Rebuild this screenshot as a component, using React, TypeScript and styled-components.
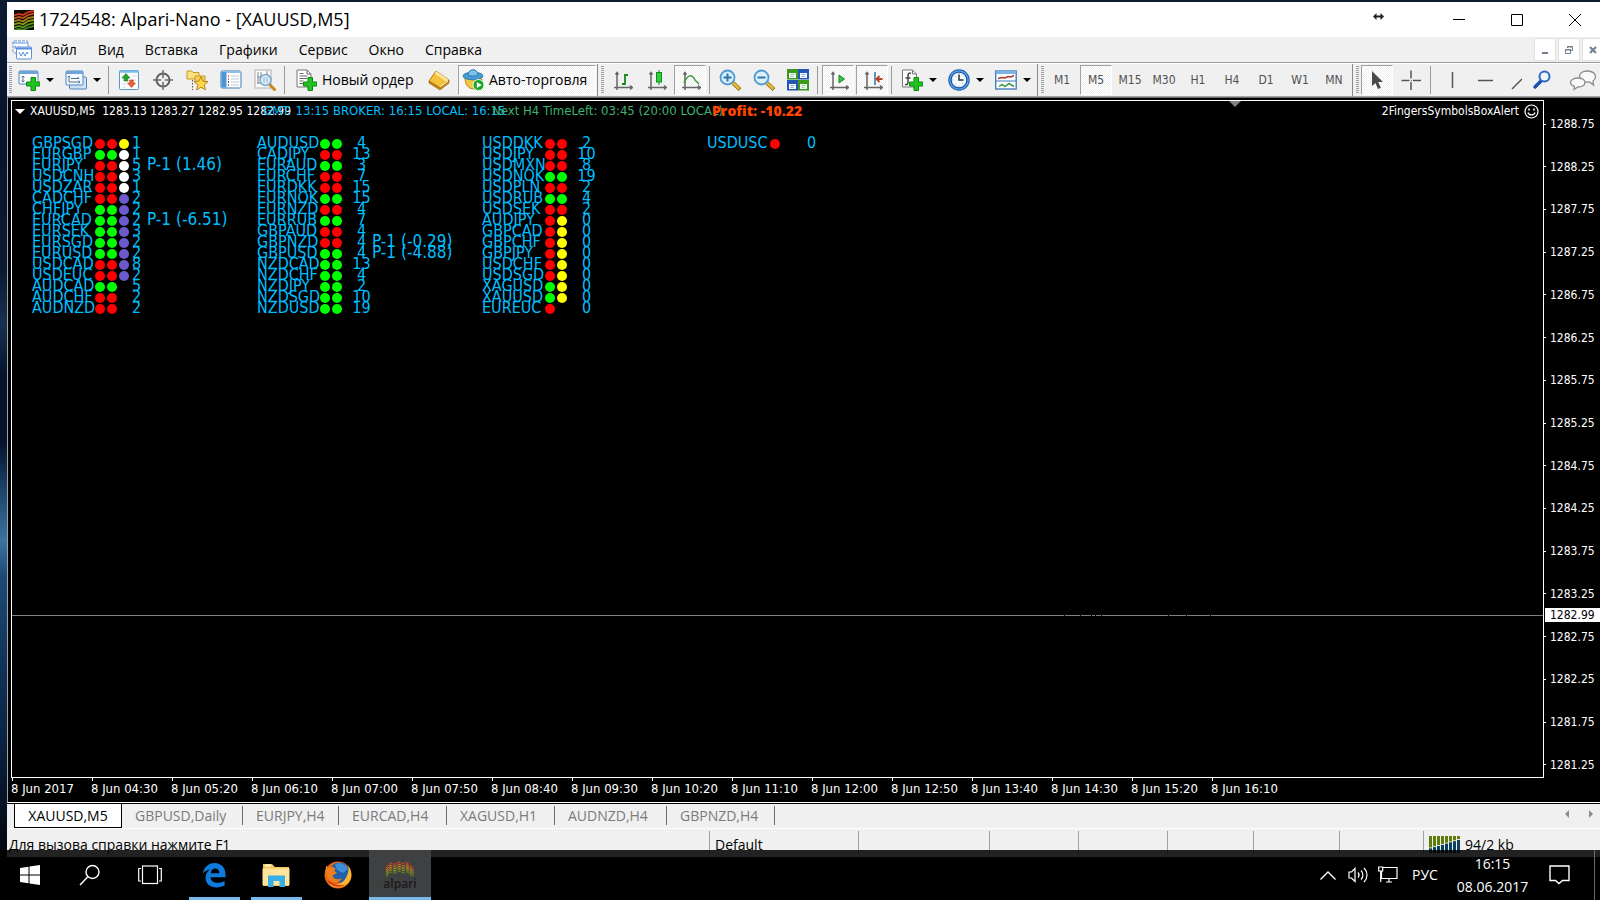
import React from 'react';
import styled, { createGlobalStyle, css } from 'styled-components';

const uiFont = '"Open Sans", "Noto Sans", sans-serif';
const chartFont = '"DejaVu Sans Condensed", "DejaVu Sans", sans-serif';

const GlobalStyle = createGlobalStyle`
  * { box-sizing: border-box; }
  body { margin: 0; font-family: ${uiFont}; font-size: 14px; line-height: 20px; color: #000; }
  button { border: 0; padding: 0; margin: 0; background: none; font: inherit; color: inherit; }
  svg { display: block; flex: none; }
`;

/* ---------- desktop and window ---------- */

const Desktop = styled.div`
  height: 100vh;
  min-height: 480px;
  display: flex;
  flex-direction: column;
  overflow: hidden;
  background: linear-gradient(
    180deg, #0b1c33 0, #06152b 14%, #0a1a31 30%, #17304f 36%, #04122a 42%, #04122a 49%,
    #1a3f63 54%, #3a74a0 60%, #1d4a75 64%, #12365c 72%, #0a2342 82%, #030a16 93%, #020509 95%, #000204 100%
  );
`;

const Window = styled.main`
  flex: 1;
  min-height: 0;
  margin: 2px 0 0 7px;
  display: flex;
  flex-direction: column;
  background: #f0f0f0;
  overflow: hidden;
`;

const TitleBar = styled.header`
  height: 35px;
  flex: none;
  display: flex;
  align-items: center;
  padding-left: 7px;
  background: #fff;
`;

const Title = styled.h1`
  flex: 1;
  margin: 0 0 0 5px;
  padding-bottom: 2px;
  font-size: 18px;
  line-height: 24px;
  font-weight: 400;
`;

const WindowButton = styled.button`
  width: 58px;
  height: 34px;
  display: grid;
  place-items: center;
  &:last-child { margin-right: -4px; }
`;

const MoveHandle = styled.button`
  width: 48px;
  height: 34px;
  margin-right: 28px;
  padding-bottom: 7px;
  display: grid;
  place-items: center;
`;

const MenuBar = styled.nav`
  height: 26px;
  flex: none;
  display: flex;
  align-items: center;
  padding-left: 5px;
  border-bottom: 1px solid #9c9c9c;
`;

const MenuList = styled.div`
  flex: 1;
  display: flex;
  gap: 21px;
  margin-left: 9px;
`;

const MdiButton = styled.button`
  width: 22px;
  height: 23px;
  margin-left: 2px;
  display: grid;
  place-items: center;
  background: #fff;
  border: 1px solid #e2e2e2;
  &:last-child { margin-right: -4px; }
`;

/* ---------- toolbar ---------- */

const ToolBar = styled.div`
  height: 34px;
  flex: none;
  display: flex;
  align-items: center;
  padding-left: 2px;
  border-top: 1px solid #fff;
  border-bottom: 1px solid #a5a5a5;
  overflow: hidden;
`;

const Grip = styled.span`
  width: 3px;
  height: 28px;
  flex: none;
  background: repeating-linear-gradient(180deg, #a0a0a0 0 1px, #f0f0f0 1px 2px);
`;

const GroupGap = styled.span`
  height: 32px;
  flex: none;
  display: flex;
  align-items: center;
  width: 8px;
  margin-left: 1px;
  padding-left: 3px;
  border-left: 1px solid #8a8a8a;
`;

const Separator = styled.span`
  width: 1px;
  height: 28px;
  flex: none;
  margin: 0 3px 0 2px;
  background: #9a9a9a;
`;

const pressedLook = css`
  background: repeating-conic-gradient(#fff 0 25%, #f0f0f0 0 50%) 0 0 / 2px 2px;
  border: 1px solid #a0a0a0;
  border-right-color: #fff;
  border-bottom-color: #fff;
`;

const Tool = styled.button<{ $pressed?: boolean }>`
  width: 32px;
  height: 30px;
  flex: none;
  margin: 0 1px;
  display: grid;
  place-items: center;
  color: #505050;
  font-family: ${chartFont};
  font-size: 12px;
  ${p => p.$pressed && pressedLook}
`;

const ClippedTool = styled(Tool)`
  flex: 0 1 32px;
  min-width: 0;
  margin-right: 0;
  overflow: hidden;
  justify-items: start;
`;

const DropTool = styled.button`
  width: 47px;
  height: 30px;
  flex: none;
  display: flex;
  align-items: center;
  padding-left: 6px;
  gap: 6px;
`;

const Caret = styled.span`
  border: 4px solid transparent;
  border-top-color: #000;
  border-bottom: 0;
`;

const WideTool = styled.button<{ $pressed?: boolean }>`
  height: 30px;
  flex: none;
  display: flex;
  align-items: center;
  gap: 5px;
  width: ${p => (p.$pressed ? 138 : 134)}px;
  margin-left: ${p => (p.$pressed ? 2 : 0)}px;
  padding-left: ${p => (p.$pressed ? 3 : 7)}px;
  white-space: nowrap;
  ${p => p.$pressed && pressedLook}
`;

const ToolEnd = styled.div`
  margin-left: auto;
  display: flex;
  flex: none;
  gap: 6px;
  padding-left: 4px;
`;

/* ---------- chart ---------- */

const ChartPane = styled.section`
  flex: 1;
  min-height: 0;
  display: grid;
  grid-template: minmax(0, 1fr) 24px / minmax(0, 1fr) 56px;
  padding: 2px 0 0 3px;
  background: #000;
  border-top: 1px solid #696969;
  border-left: 1px solid #a0a0a0;
  border-bottom: 1px solid #fff;
  color: #fff;
  font-family: ${chartFont};
  font-size: 12px;
`;

const Plot = styled.div`
  position: relative;
  border: 1px solid #fff;
  padding: 0 4px 0 3px;
  overflow: hidden;
`;

const PlotHeader = styled.div`
  display: flex;
  align-items: center;
  height: 20px;
  gap: 5px;
`;

const Quote = styled.span`
  flex: 1;
  white-space: pre;
`;

const HeaderCaret = styled.span`
  border: 5px solid transparent;
  border-top-color: #fff;
  border-bottom: 0;
`;

const ShiftMark = styled.span`
  position: absolute;
  top: 0;
  right: 302px;
  border: 6px solid transparent;
  border-top-color: #808080;
  border-bottom: 0;
`;

const ChartLabel = styled.span<{ $left: number; $color: string; $heavy?: boolean }>`
  position: absolute;
  top: 0;
  left: ${p => p.$left}px;
  color: ${p => p.$color};
  white-space: nowrap;
  font-size: 13px;
  ${p => p.$heavy && css`font: 800 14px/20px "Open Sans", sans-serif;`}
`;

const PriceLine = styled.svg`
  position: absolute;
  left: 0;
  top: 76%;
  width: 100%;
  height: 1px;
`;

const SymbolBoard = styled.div`
  display: grid;
  grid-template-columns: repeat(4, 225px);
  padding: 16px 0 0 17px;
`;

const SymbolRow = styled.div`
  display: grid;
  grid-template-columns: 63px 36px 11px max-content;
  height: 11px;
  line-height: 11px;
  font-size: 16px;
  color: #00bfff;
  white-space: nowrap;
`;

const Dots = styled.span`
  display: flex;
  gap: 2px;
  padding-top: 2px;
  z-index: 1;
`;

const dotColors: Record<string, string> = { r: '#f00', g: '#0f0', y: '#ff0', w: '#fff', p: '#6a5acd' };

const Dot = styled.i<{ $c: string }>`
  width: 10px;
  height: 10px;
  border-radius: 50%;
  background: ${p => dotColors[p.$c]};
`;

const Count = styled.span`
  display: flex;
  justify-content: center;
`;

const Position = styled.span`
  padding-left: 5px;
  font-size: 17px;
`;

const PriceAxis = styled.div`
  position: relative;
  display: flex;
  flex-direction: column;
  justify-content: space-between;
  padding: 15px 0 4px;
`;

const Price = styled.span`
  display: flex;
  align-items: center;
  gap: 4px;
  line-height: 18px;
  &::before { content: ''; width: 2px; height: 1px; background: #fff; }
`;

const CurrentPrice = styled.span`
  position: absolute;
  top: 76%;
  left: 1px;
  right: 0;
  transform: translateY(-50%);
  padding-left: 5px;
  line-height: 14px;
  background: #fff;
  color: #000;
`;

const TimeAxis = styled.div`
  grid-column: 1 / -1;
  display: grid;
  grid-template-columns: repeat(16, 80px);
  overflow: hidden;
`;

const Time = styled.span`
  position: relative;
  white-space: nowrap;
  font-size: 13px;
  line-height: 22px;
  &::before {
    content: '';
    position: absolute;
    top: 0;
    left: 1px;
    width: 1px;
    height: 3px;
    background: #fff;
  }
`;

/* ---------- tabs and status bar ---------- */

const TabStrip = styled.nav`
  height: 26px;
  flex: none;
  display: flex;
  padding-left: 7px;
  border-top: 1px solid #000;
  border-bottom: 1px solid #fff;
`;

const Tab = styled.button<{ $width: number; $active?: boolean }>`
  width: ${p => p.$width}px;
  flex: none;
  padding-left: ${p => (p.$active ? 0 : 13)}px;
  text-align: ${p => (p.$active ? 'center' : 'left')};
  white-space: nowrap;
  color: ${p => (p.$active ? '#000' : '#7b7b7b')};
  ${p => p.$active
    ? css`
        background: #fff;
        border: 1px solid #000;
        border-top: 0;
      `
    : css`
        position: relative;
        &::after {
          content: '';
          position: absolute;
          right: 0;
          top: 2px;
          width: 1px;
          height: 19px;
          background: #6d6d6d;
        }
      `}
`;

const TabScroll = styled.div`
  margin-left: auto;
  display: flex;
  gap: 20px;
  align-items: center;
  padding: 0 7px 4px 0;
`;

const ScrollButton = styled.button`
  width: 4px;
  height: 8px;
`;

const StatusBar = styled.footer`
  height: 28px;
  flex: none;
  display: flex;
  align-items: center;
  padding-left: 2px;
`;

const StatusCell = styled.span<{ $width?: number }>`
  ${p => (p.$width ? `width: ${p.$width}px; flex: none; padding-left: 5px; border-left: 1px solid #a0a0a0;` : 'flex: 1;')}
  height: 24px;
  display: flex;
  align-items: center;
  gap: 5px;
  line-height: 24px;
  padding-top: 3px;
  white-space: nowrap;
`;

/* ---------- taskbar ---------- */

const TaskBar = styled.nav`
  position: relative;
  height: 50px;
  margin-top: -7px;
  flex: none;
  display: flex;
  background: rgba(0, 0, 0, 0.86);
  color: #fff;
`;

const TaskButton = styled.button<{ $app?: boolean; $open?: boolean; $active?: boolean }>`
  width: ${p => (p.$app ? 62 : 60)}px;
  display: grid;
  place-items: center;
  background: linear-gradient(#76b9ed, #76b9ed) center bottom / ${p => (p.$active ? '100%' : p.$open ? '51px' : '0')} 3px no-repeat
    ${p => (p.$active ? '#3f4042' : 'transparent')};
`;

const Gap = styled.span<{ $width: number }>`
  width: ${p => p.$width}px;
`;

const Tray = styled.div`
  margin-left: auto;
  display: flex;
  align-items: center;
`;

const TrayButton = styled.button<{ $width: number }>`
  width: ${p => p.$width}px;
  height: 50px;
  display: grid;
  place-items: center;
  line-height: 22px;
`;

const Clock = styled.time`
  width: 91px;
  text-align: center;
  line-height: 23px;
  padding-bottom: 1px;
`;

const ShowDesktop = styled.button`
  width: 6px;
  height: 50px;
  border-left: 1px solid #6a6a6a;
`;

/* ---------- icons ---------- */

const Svg = ({ s = 22, children }: { s?: number; children: React.ReactNode }) => (
  <svg width={s} height={s} viewBox="0 0 22 22" fill="none" aria-hidden="true">{children}</svg>
);

const Plus = () => (
  <path d="M13 8.500h4.500v4.500h4.500v4h-4.500v4.500h-4.500v-4.500h-4.500v-4h4.500z" fill="#1fc41f" stroke="#0a8a0f" />
);

const LogoIcon = () => (
  <svg width="20" height="20" viewBox="0 0 20 20" fill="none" strokeWidth="1.800" aria-hidden="true">
    <rect width="20" height="20" fill="#120c04" />
    <path d="M0 5.500l5-1.500 4 1 5-3 6-1" stroke="#d8351c" />
    <path d="M0 8.500l5-1.500 4 1 5-3 6-1.500" stroke="#c8551c" />
    <path d="M0 11.500l5-1.500 4 1.500 5-3.500 6-1" stroke="#a8801c" />
    <path d="M0 14.500l5-1.500 4 1.500 5-3.500 6-1" stroke="#8a9a1a" />
    <path d="M0 17.500l5-1.500 4 1.500 5-3 6-1.500" stroke="#5c9c1c" />
    <path d="M0 20l5-1 4 1 5-2.500 6-1.500" stroke="#3c8c20" />
  </svg>
);

const MdiIcon = () => (
  <svg width="20" height="20" viewBox="0 0 20 20" fill="none" stroke="#5b8fdc" aria-hidden="true">
    <rect x="1" y="1" width="15" height="12" rx="1" fill="#fff" strokeDasharray="3 1" />
    <path d="M1 3h15M3 9V6l2 3 2-3" />
    <rect x="4.500" y="7" width="15" height="12" rx="1" fill="#fff" />
    <path d="M4.500 8.500h15" strokeWidth="2" />
    <path d="M7 12l2 4 2-4 2 4 2-4 1 2" />
  </svg>
);

const NewChartIcon = () => (
  <Svg>
    <rect x="1" y="2" width="19" height="13" rx="1" fill="#fff" stroke="#4f86bd" />
    <path d="M1 3.500h19" stroke="#6ea4d8" strokeWidth="3" />
    <path d="M5 7v6M3.500 8.500L5 7l1.500 1.500M3.500 11.500L5 13l1.500-1.500" stroke="#5a7085" />
    <Plus />
  </Svg>
);

const ProfilesIcon = () => (
  <Svg>
    <rect x="4.500" y="8" width="17" height="12" rx="1" fill="#cfe2f5" stroke="#4f86bd" />
    <rect x="1" y="2" width="17" height="14" rx="1" fill="#f4faff" stroke="#4f86bd" />
    <path d="M1 3.500h17" stroke="#6ea4d8" strokeWidth="3" />
    <path d="M4 7v6h11M2.800 8.200L4 7l1.200 1.200M13.500 11.500L15 13l-1.500 1.500M6 9.500h8l-1.500-1.500" stroke="#5a7085" />
  </Svg>
);

const MarketIcon = () => (
  <Svg>
    <rect x="1.500" y="1.500" width="19" height="19" rx="1" fill="#fdfdfd" stroke="#4f9bd0" />
    <path d="M1.500 2.500h19" stroke="#77bce8" strokeWidth="2.500" />
    <path d="M4 7h5M4 11h4M14 7h5M14 11h4M4 15h4M4 18h4" stroke="#dcdcdc" />
    <path d="M8 4.500l4 4.500H9.800v3H6.200V9H4z" fill="#23a32b" stroke="#0d7a16" strokeWidth=".6" />
    <path d="M13.500 18.500l-4-4.500h2.200v-3h3.600v3h2.200z" fill="#e9603a" stroke="#c03c18" strokeWidth=".6" />
  </Svg>
);

const TargetIcon = () => (
  <Svg>
    <circle cx="11" cy="11" r="6.500" stroke="#5e5e5e" strokeWidth="2" />
    <path d="M11 1v20M1 11h20" stroke="#6a6a6a" strokeWidth="1.500" />
    <circle cx="11" cy="11" r="2" fill="#f0f0f0" />
  </Svg>
);

const NavigatorIcon = () => (
  <Svg>
    <path d="M1 2h5l1 1.500h6V10H1z" fill="#fbe182" stroke="#c99b22" />
    <path d="M6.500 11v10" stroke="#555" strokeDasharray="1.500 1.500" />
    <path d="M9 7h10v6H9z" fill="#f7d25c" stroke="#c99b22" />
    <path d="M15 7.500l2 4.700 5 .4-3.800 3.300 1.200 5-4.400-2.700-4.400 2.700 1.200-5L8 12.600l5-.4z" fill="#ffd84a" stroke="#b9861a" />
  </Svg>
);

const TerminalIcon = () => (
  <Svg>
    <rect x="1" y="2" width="20" height="17" rx="1.500" fill="#fff" stroke="#3b78b8" />
    <path d="M1.500 3h5v15.500h-5z" fill="#4c96d8" />
    <path d="M6 3h15" stroke="#8fc0ea" strokeWidth="2" />
    <path d="M8 7h1M8 10h1" stroke="#e03a2a" strokeWidth="1.500" />
    <path d="M8 13h1M8 16h1" stroke="#333" strokeWidth="1.500" />
    <path d="M11 7h8M11 10h8M11 13h8M11 16h8" stroke="#b8c8d8" />
  </Svg>
);

const TesterIcon = () => (
  <Svg>
    <rect x="1" y="1" width="16" height="18" fill="#fafafa" stroke="#b0b0b0" />
    <path d="M4 3v12M7 3v9M13 2v6M3 8h11M3 14h5" stroke="#8a8a8a" />
    <path d="M15.500 15.500l5 5" stroke="#c98a1c" strokeWidth="3" strokeLinecap="round" />
    <circle cx="11.500" cy="11" r="5.500" fill="#d6ebfa" fillOpacity=".9" stroke="#7da8cc" strokeWidth="1.500" />
    <path d="M10 8.500v5M13 8.500v5" stroke="#8eb0c8" />
  </Svg>
);

const OrderIcon = () => (
  <Svg>
    <path d="M2 1h10l4 4v13H2z" fill="#fff" stroke="#777" />
    <path d="M12 1v4h4M4.500 4.500h4M4.500 7h8M4.500 9.500h8M4.500 12h4M4.500 14.500h4" stroke="#666" />
    <Plus />
  </Svg>
);

const BookIcon = () => (
  <Svg>
    <path d="M8 2l13 9-9 8L1 12z" fill="#f5c23c" stroke="#b27b14" />
    <path d="M8 2l13 9-2 2L7 5z" fill="#ffe59a" />
    <path d="M1 12l11 7 9-8v3l-9 7-11-7z" fill="#c98b1e" stroke="#97640c" strokeWidth=".7" />
    <path d="M12 18l8-6" stroke="#fff4cf" />
  </Svg>
);

const AutoIcon = () => (
  <Svg>
    <path d="M3 9c0 6 3 11 9 11 5 0 8-5 8-10z" fill="#f2c83c" stroke="#b88c1c" />
    <ellipse cx="11" cy="7" rx="10" ry="3.800" fill="#4b9bd4" stroke="#2d78b2" />
    <path d="M6 6c0-7 10-7 10 0-2 1.500-8 1.500-10 0z" fill="#7cc0ec" stroke="#2d78b2" />
    <circle cx="16.500" cy="16" r="5.500" fill="#19a52a" stroke="#e8ffe8" />
    <path d="M14.800 13l5 3-5 3z" fill="#fff" />
  </Svg>
);

/* The axis icons sit low and to the right in their 22px box. */
const AxisSvg = ({ children }: { children: React.ReactNode }) => (
  <svg width="22" height="22" viewBox="-2 -1 22 22" fill="none" aria-hidden="true">
    <path d="M4 2.500V18M1 17.500h18M2.500 4.500L4 2.500l1.500 2M17 15.500l2.500 2-2.500 2M4 17v3" stroke="#666" strokeWidth="1.500" />
    {children}
  </svg>
);

const BarsIcon = () => (
  <AxisSvg><path d="M12 4v11M12 5h3M9 14h3" stroke="#158a22" strokeWidth="1.800" /></AxisSvg>
);

const CandlesIcon = () => (
  <AxisSvg>
    <path d="M12 0v15" stroke="#158a22" />
    <rect x="9.500" y="2.500" width="5" height="9.500" fill="#2bd13a" stroke="#158a22" />
  </AxisSvg>
);

const LineIcon = () => (
  <AxisSvg><path d="M3 13c4-9 8-9 11-3l4 4" stroke="#3a9a46" strokeWidth="1.500" /></AxisSvg>
);

const ZoomIcon = ({ plus }: { plus?: boolean }) => (
  <Svg>
    <path d="M14 14l7 6.500" stroke="#8a6a14" strokeWidth="4" />
    <path d="M14 14l6.500 6" stroke="#e8b838" strokeWidth="2.500" />
    <circle cx="8.500" cy="8.500" r="7" fill="#d9effb" stroke="#4f9bd0" strokeWidth="1.800" />
    <path d={plus ? 'M8.500 4.500v8M4.500 8.500h8' : 'M4.500 8.500h8'} stroke="#2f74ad" strokeWidth="2" />
  </Svg>
);

const TileIcon = () => (
  <Svg>
    {[['0', '0', '#3a9a1c'], ['11', '0', '#2456b8'], ['0', '11', '#2456b8'], ['11', '11', '#3a9a1c']].map(([x, y, c]) => (
      <g key={x + y} transform={`translate(${x} ${y})`}>
        <rect width="11" height="10.500" fill={c} />
        <rect x="2" y="4" width="7" height="5" fill="#f4f8ff" />
        <path d="M3.500 5.500h4M3.500 7.500h3" stroke={c} strokeOpacity=".5" />
      </g>
    ))}
  </Svg>
);

const AutoScrollIcon = () => (
  <AxisSvg><path d="M10 5l5.500 4-5.500 4z" fill="#36c244" stroke="#158a22" /></AxisSvg>
);

const ShiftIcon = () => (
  <AxisSvg>
    <path d="M12 2v13" stroke="#2f74ad" strokeWidth="1.500" />
    <path d="M19.500 9H14M16.500 6l-3 3 3 3" stroke="#b8401c" strokeWidth="1.800" />
  </AxisSvg>
);

const IndicatorIcon = () => (
  <Svg>
    <path d="M1.500 1h10l4 4v13h-14z" fill="#fff" stroke="#777" />
    <path d="M11.500 1v4h4" stroke="#777" />
    <path d="M10 4.500C7 3 7 6 7 8v5c0 2-1 3-3 2.500M4.500 9h5" stroke="#444" strokeWidth="1.500" />
    <Plus />
  </Svg>
);

const ClockIcon = () => (
  <Svg>
    <circle cx="11" cy="11" r="9" fill="#f4f8fc" stroke="#1c5aa8" strokeWidth="3.500" />
    <circle cx="11" cy="11" r="9.200" stroke="#5aa6ec" strokeWidth="1.200" />
    <path d="M11 5.500V11h4.500" stroke="#333" strokeWidth="1.500" />
    <path d="M11 4v1M11 17v1M4.500 11h1M7 7l.5.500M7 15l.5-.5M15 15l-.5-.5" stroke="#999" />
  </Svg>
);

const TemplateIcon = () => (
  <Svg>
    <rect x=".7" y="2" width="20.500" height="18" fill="#fff" stroke="#3b78b8" strokeWidth="1.300" />
    <path d="M1 3.500h20" stroke="#7db2e4" strokeWidth="3" />
    <path d="M1 12h20" stroke="#3b78b8" />
    <path d="M3 9.500l4-1 3 .5 3-1.500 3 .5 3-1.500" stroke="#a83a28" strokeWidth="1.500" />
    <path d="M4 17.500l3-2 3 2 4-3 5 3" stroke="#3a9a46" strokeWidth="1.500" />
  </Svg>
);

const CursorIcon = () => (
  <Svg><path d="M6 2v15l3.500-3 2.500 6 2.800-1.200-2.600-5.800H17z" fill="#4a4a4a" /></Svg>
);

const CrossIcon = () => (
  <Svg>
    <path d="M11 1.500v8M11 13v8M1.500 11.500h8M13 11.500h8" stroke="#555" strokeWidth="1.500" />
    <path d="M11 11h1v1h-1z" fill="#555" />
  </Svg>
);

const SearchIcon = () => (
  <Svg>
    <path d="M9 12l-6 6" stroke="#1d4fae" strokeWidth="3.500" strokeLinecap="round" />
    <circle cx="12.500" cy="7.500" r="5" fill="#eef5ff" stroke="#2f66c4" strokeWidth="2" />
  </Svg>
);

const ChatIcon = () => (
  <svg width="28" height="22" viewBox="0 0 28 22" fill="#fafafa" stroke="#8c8c8c" strokeWidth="1.300" aria-hidden="true">
    <path d="M18.500 2c5 0 8 2.500 8 5.500 0 2-1 3.500-2.500 4.500l.5 4-4-3c-6 .7-10-2-10-5.500S13.500 2 18.500 2z" />
    <path d="M9 9c4 0 7 2 7 4.500S13 18 9 18l-4 2.500.5-3.200C3 16.500 1.500 15 1.500 13.500 1.500 11 5 9 9 9z" />
  </svg>
);

const SmileIcon = () => (
  <svg width="15" height="15" viewBox="0 0 15 15" fill="none" stroke="#fff" aria-hidden="true">
    <circle cx="7.500" cy="7.500" r="6.500" strokeWidth="1.200" />
    <path d="M4 8.500c1 3.200 6 3.200 7 0" strokeWidth="1.200" />
    <path d="M5 4.500v2M10 4.500v2" strokeWidth="1.600" />
  </svg>
);

const TrafficIcon = () => (
  <svg width="31" height="17" viewBox="0 0 31 17" aria-hidden="true">
    {[0, 1, 2, 3, 4, 5, 6, 7].map(i => (
      <g key={i}>
        <rect x={i * 4} width="3" height="17" fill="#5e7d0c" />
        <rect x={i * 4} y={11.5 - i * 1.2} width="3" height="1" fill="#f0f0f0" />
        <rect x={i * 4} y={12.5 - i * 1.2} width="3" height={17} fill="#0b3f5e" />
      </g>
    ))}
  </svg>
);

const StartIcon = () => (
  <svg width="20" height="20" viewBox="0 0 20 20" fill="#fff" aria-hidden="true">
    <path d="M0 3l8.500-1.200v7.700H0zM9.500 1.600L20 0v9.500H9.500zM0 10.500h8.500v7.700L0 17zM9.500 10.500H20V20l-10.500-1.600z" />
  </svg>
);

const LoupeIcon = () => (
  <svg width="22" height="22" viewBox="0 0 22 22" fill="none" stroke="#fff" strokeWidth="1.400" aria-hidden="true">
    <circle cx="13.500" cy="8" r="6.500" />
    <path d="M9 12.500L1 21" />
  </svg>
);

const TaskViewIcon = () => (
  <svg width="24" height="20" viewBox="0 0 24 20" fill="none" stroke="#fff" strokeWidth="1.200" aria-hidden="true">
    <rect x="4.500" y="1" width="15" height="17.500" />
    <path d="M3 3.500H.7v12.500H3M21 3.500h2.300v12.500H21" />
  </svg>
);

const EdgeIcon = () => (
  <svg width="24" height="26" viewBox="0 0 26 27" fill="#0f7bdc" aria-hidden="true">
    <path d="M1 12C2 5 7 .5 13.500.5 21 .5 25.500 6 25.500 13v3H9.200c.2 4 3.800 6 7.800 6 3 0 5.500-.9 7.500-2v5c-2.400 1.300-5.200 2-8.500 2C8.500 27 3.800 22.500 3.800 16.500c0-4 2-7.200 5.200-9C5.500 8 2.800 9.500 1 12zm8.500-.5h9.300c0-3.200-1.700-5-4.500-5-2.600 0-4.500 2-4.800 5z" fillRule="evenodd" />
  </svg>
);

const FolderIcon = () => (
  <svg width="28" height="24" viewBox="0 0 28 24" aria-hidden="true">
    <path d="M1 1h9l3 3h14v19H1z" fill="#f4c95a" />
    <path d="M3 1.500h6v2H3z" fill="#fff6d8" />
    <path d="M.5 5.500h27V22H.5z" fill="#fee59b" />
    <path d="M6 24V12.500h17V24h-5.500v-6h-6v6z" fill="#37aee6" />
  </svg>
);

const FirefoxIcon = () => (
  <svg width="28" height="28" viewBox="0 0 28 28" aria-hidden="true">
    <circle cx="14" cy="14" r="13.500" fill="#e66a14" />
    <circle cx="15.500" cy="11.500" r="10" fill="#1f5fae" />
    <path d="M11 3c5-2 11 0 13 5l-5 4-6-3z" fill="#3d8fd8" />
    <path d="M2.500 4.500L5 7c2-1.500 5-1 6.500.5l-1 2.500 2.500 2-4.500 2.500c1 4 6 5 9.500 2.500-2 5-9 6-12.500 2C2 15 .5 9 2.500 4.500z" fill="#f07d18" />
    <path d="M24.500 5c4 6 4 13-1.500 18-6 5-14 4-18.500 0 7 2.500 13 0 16-4 3-4 4.500-9 4-14z" fill="#fbb72c" />
    <path d="M3 19c3 6 11 9 18 4.500-5 1-10 1-13-1.500z" fill="#d2361a" />
  </svg>
);

const AlpariMark = styled.span`
  display: grid;
  justify-items: center;
  font-size: 12px;
  line-height: 13px;
  font-weight: 600;
  color: #1a1a1a;
`;

const AlpariIcon = () => (
  <AlpariMark>
    <svg width="30" height="16" viewBox="0 0 32 17" fill="none" strokeWidth="1.300" aria-hidden="true">
      {['#c8401c', '#cc6a1c', '#bc8a1c', '#8c901c', '#5c8020'].map((c, i) => (
        <path key={c} stroke={c} strokeDasharray="4 1" d={`M1 ${7 + i * 2.4}l5-5 4 1.500 5-2.500 4 2 4-1.500 3 2.500 5 4`} />
      ))}
    </svg>
    alpari
  </AlpariMark>
);

/* ---------- data ---------- */

const menu = ['Файл', 'Вид', 'Вставка', 'Графики', 'Сервис', 'Окно', 'Справка'];
const frames = ['M1', 'M5', 'M15', 'M30', 'H1', 'H4', 'D1', 'W1', 'MN'];

type Row = [name: string, dots: string, count: number, position?: string];

const board: Row[][] = [
  [
    ['GBPSGD', 'rry', 1], ['EURGBP', 'ggw', 1], ['EURJPY', 'rrw', 5, 'P-1 (1.46)'], ['USDCNH', 'rrw', 3],
    ['USDZAR', 'rrw', 1], ['CADCHF', 'rrp', 2], ['CHFJPY', 'ggp', 2], ['EURCAD', 'ggp', 2, 'P-1 (-6.51)'],
    ['EURSEK', 'ggp', 3], ['EURSGD', 'ggp', 2], ['EURUSD', 'ggp', 2], ['USDCAD', 'rrp', 8],
    ['USDEUC', 'rrp', 2], ['AUDCAD', 'gg', 5], ['AUDCHF', 'rr', 2], ['AUDNZD', 'rr', 2],
  ],
  [
    ['AUDUSD', 'gg', 4], ['CADJPY', 'rr', 13], ['EURAUD', 'gg', 3], ['EURCHF', 'rr', 7],
    ['EURDKK', 'rr', 15], ['EURNOK', 'gg', 15], ['EURNZD', 'rr', 4], ['EURRUB', 'gg', 7],
    ['GBPAUD', 'rr', 4], ['GBPNZD', 'rr', 4, 'P-1 (-0.29)'], ['GBPUSD', 'gg', 4, 'P-1 (-4.88)'], ['NZDCAD', 'gg', 13],
    ['NZDCHF', 'gg', 4], ['NZDJPY', 'gg', 2], ['NZDSGD', 'gg', 10], ['NZDUSD', 'gg', 19],
  ],
  [
    ['USDDKK', 'rr', 2], ['USDJPY', 'rr', 10], ['USDMXN', 'rr', 8], ['USDNOK', 'gg', 19],
    ['USDPLN', 'rr', 2], ['USDRUB', 'gg', 4], ['USDSEK', 'rr', 2], ['AUDJPY', 'ry', 0],
    ['GBPCAD', 'ry', 0], ['GBPCHF', 'ry', 0], ['GBPJPY', 'ry', 0], ['USDCHF', 'ry', 0],
    ['USDSGD', 'ry', 0], ['XAGUSD', 'gy', 0], ['XAUUSD', 'gy', 0], ['EUREUC', 'r', 0],
  ],
  [['USDUSC', 'r', 0]],
];

const prices = Array.from({ length: 16 }, (_, i) => (1288.75 - i * 0.5).toFixed(2));

const times = [
  '8 Jun 2017', '8 Jun 04:30', '8 Jun 05:20', '8 Jun 06:10', '8 Jun 07:00', '8 Jun 07:50', '8 Jun 08:40', '8 Jun 09:30',
  '8 Jun 10:20', '8 Jun 11:10', '8 Jun 12:00', '8 Jun 12:50', '8 Jun 13:40', '8 Jun 14:30', '8 Jun 15:20', '8 Jun 16:10',
];

const tabs: [string, number][] = [
  ['XAUUSD,M5', 108], ['GBPUSD,Daily', 121], ['EURJPY,H4', 96], ['EURCAD,H4', 108],
  ['XAGUSD,H1', 108], ['AUDNZD,H4', 112], ['GBPNZD,H4', 108],
];

const lineGaps = [1052, 1068, 1079, 1083, 1089, 1156, 1174, 1198];

export default function App() {
  return (
    <>
      <GlobalStyle />
      <Desktop>
        <Window>
          <TitleBar>
            <LogoIcon />
            <Title>1724548: Alpari-Nano - [XAUUSD,M5]</Title>
            <MoveHandle aria-label="Переместить">
              <svg width="11" height="7" viewBox="0 0 11 7" fill="#222" aria-hidden="true">
                <path d="M0 3.500L3.500 0v2.500h4V0L11 3.500 7.500 7V4.500h-4V7z" />
              </svg>
            </MoveHandle>
            <WindowButton aria-label="Свернуть">
              <svg width="12" height="12" viewBox="0 0 12 12" stroke="#000"><path d="M0 5.500h12" /></svg>
            </WindowButton>
            <WindowButton aria-label="Развернуть">
              <svg width="12" height="12" viewBox="0 0 12 12" stroke="#000" fill="none"><path d="M.5.500h11v11H.5z" /></svg>
            </WindowButton>
            <WindowButton aria-label="Закрыть">
              <svg width="12" height="12" viewBox="0 0 12 12" stroke="#000"><path d="M0 0l12 12M12 0L0 12" /></svg>
            </WindowButton>
          </TitleBar>

          <MenuBar>
            <MdiIcon />
            <MenuList>{menu.map(m => <button key={m}>{m}</button>)}</MenuList>
            <MdiButton aria-label="Свернуть окно">
              <svg width="6" height="8" viewBox="0 0 6 8"><path d="M0 6h6v2H0z" fill="#6f7f90" /></svg>
            </MdiButton>
            <MdiButton aria-label="Восстановить окно">
              <svg width="8" height="8" viewBox="0 0 8 8" fill="none" stroke="#6f7f90"><path d="M2.500 2V.5h5v4H6M2 1h6" /><path d="M.5 3.500h5v4h-5zM0 4h6" /></svg>
            </MdiButton>
            <MdiButton aria-label="Закрыть окно">
              <svg width="8" height="8" viewBox="0 0 8 8" stroke="#6f7f90" strokeWidth="2"><path d="M1 1l6 6M7 1L1 7" /></svg>
            </MdiButton>
          </MenuBar>

          <ToolBar>
            <Grip />
            <DropTool aria-label="Новый график"><NewChartIcon /><Caret /></DropTool>
            <DropTool aria-label="Профили"><ProfilesIcon /><Caret /></DropTool>
            <Separator />
            <Tool aria-label="Обзор рынка"><MarketIcon /></Tool>
            <Tool aria-label="Окно данных"><TargetIcon /></Tool>
            <Tool aria-label="Навигатор"><NavigatorIcon /></Tool>
            <Tool aria-label="Терминал"><TerminalIcon /></Tool>
            <Tool aria-label="Тестер"><TesterIcon /></Tool>
            <Separator />
            <WideTool><OrderIcon />Новый ордер</WideTool>
            <Tool aria-label="MetaEditor"><BookIcon /></Tool>
            <WideTool $pressed><AutoIcon />Авто-торговля</WideTool>
            <GroupGap><Grip /></GroupGap>
            <Tool aria-label="Бары"><BarsIcon /></Tool>
            <Tool aria-label="Свечи"><CandlesIcon /></Tool>
            <Tool $pressed aria-label="Линия"><LineIcon /></Tool>
            <Separator />
            <Tool aria-label="Приблизить"><ZoomIcon plus /></Tool>
            <Tool aria-label="Отдалить"><ZoomIcon /></Tool>
            <Tool aria-label="Упорядочить"><TileIcon /></Tool>
            <Separator />
            <Tool $pressed aria-label="Автопрокрутка"><AutoScrollIcon /></Tool>
            <Tool $pressed aria-label="Сдвиг графика"><ShiftIcon /></Tool>
            <Separator />
            <DropTool aria-label="Индикаторы"><IndicatorIcon /><Caret /></DropTool>
            <DropTool aria-label="Периоды"><ClockIcon /><Caret /></DropTool>
            <DropTool aria-label="Шаблоны"><TemplateIcon /><Caret /></DropTool>
            <GroupGap><Grip /></GroupGap>
            {frames.map(f => <Tool key={f} $pressed={f === 'M5'}>{f}</Tool>)}
            <GroupGap><Grip /></GroupGap>
            <Tool $pressed aria-label="Курсор"><CursorIcon /></Tool>
            <Tool aria-label="Перекрестие"><CrossIcon /></Tool>
            <Separator />
            <Tool aria-label="Вертикальная линия"><Svg><path d="M12.500 3v16" stroke="#555" strokeWidth="1.500" /></Svg></Tool>
            <Tool aria-label="Горизонтальная линия"><Svg><path d="M4 11.500h15" stroke="#555" strokeWidth="1.500" /></Svg></Tool>
            <ClippedTool aria-label="Трендовая линия"><Svg><path d="M9 20l10-10" stroke="#555" strokeWidth="1.500" /></Svg></ClippedTool>
            <ToolEnd>
              <Tool aria-label="Поиск"><SearchIcon /></Tool>
              <Tool aria-label="Чат"><ChatIcon /></Tool>
            </ToolEnd>
          </ToolBar>

          <ChartPane>
            <Plot>
              <PlotHeader>
                <HeaderCaret />
                <Quote>XAUUSD,M5  1283.13 1283.27 1282.95 1282.99</Quote>
                2FingersSymbolsBoxAlert <SmileIcon />
              </PlotHeader>
              <ChartLabel $left={251} $color="#00bfff">GMT: 13:15 BROKER: 16:15 LOCAL: 16:15</ChartLabel>
              <ChartLabel $left={480} $color="#3cb371">Next H4 TimeLeft: 03:45 (20:00 LOCAL)</ChartLabel>
              <ChartLabel $left={700} $color="#ff4500" $heavy>Profit: -10.22</ChartLabel>
              <ShiftMark />
              <SymbolBoard>
                {board.map((column, i) => (
                  <div key={i}>
                    {column.map(([name, dots, count, position]) => (
                      <SymbolRow key={name}>
                        <span>{name}</span>
                        <Dots>{dots.split('').map((c, k) => <Dot key={k} $c={c} />)}</Dots>
                        <Count>{count}</Count>
                        {position && <Position>{position}</Position>}
                      </SymbolRow>
                    ))}
                  </div>
                ))}
              </SymbolBoard>
              <PriceLine>
                <rect width="100%" height="1" fill="#808080" />
                {lineGaps.map(x => <rect key={x} x={x} width="1" height="1" />)}
              </PriceLine>
            </Plot>
            <PriceAxis>
              {prices.map(p => <Price key={p}>{p}</Price>)}
              <CurrentPrice>1282.99</CurrentPrice>
            </PriceAxis>
            <TimeAxis>{times.map(t => <Time key={t}>{t}</Time>)}</TimeAxis>
          </ChartPane>

          <TabStrip>
            {tabs.map(([t, w], i) => <Tab key={t} $width={w} $active={i === 0}>{t}</Tab>)}
            <TabScroll>
              <ScrollButton aria-label="Назад">
                <svg width="4" height="8" viewBox="0 0 4 8"><path d="M4 0v8L0 4z" fill="#8c8c8c" /></svg>
              </ScrollButton>
              <ScrollButton aria-label="Вперёд">
                <svg width="4" height="8" viewBox="0 0 4 8"><path d="M0 0v8l4-4z" fill="#8c8c8c" /></svg>
              </ScrollButton>
            </TabScroll>
          </TabStrip>

          <StatusBar>
            <StatusCell>Для вызова справки нажмите F1</StatusCell>
            <StatusCell $width={149}>Default</StatusCell>
            {[131, 89, 89, 86, 86, 84].map((w, i) => <StatusCell key={i} $width={w} />)}
            <StatusCell $width={177}><TrafficIcon />94/2 kb</StatusCell>
          </StatusBar>
        </Window>

        <TaskBar>
          <TaskButton aria-label="Пуск"><StartIcon /></TaskButton>
          <TaskButton aria-label="Поиск"><LoupeIcon /></TaskButton>
          <TaskButton aria-label="Представление задач"><TaskViewIcon /></TaskButton>
          <Gap $width={3} />
          <TaskButton $app $open aria-label="Edge"><EdgeIcon /></TaskButton>
          <TaskButton $app $open aria-label="Проводник"><FolderIcon /></TaskButton>
          <TaskButton $app aria-label="Firefox"><FirefoxIcon /></TaskButton>
          <TaskButton $app $active aria-label="Alpari"><AlpariIcon /></TaskButton>
          <Tray>
            <TrayButton $width={30} aria-label="Скрытые значки">
              <svg width="16" height="9" viewBox="0 0 16 9" fill="none" stroke="#fff" strokeWidth="1.400"><path d="M.5 8.500L8 1l7.500 7.500" /></svg>
            </TrayButton>
            <TrayButton $width={30} aria-label="Громкость">
              <svg width="21" height="18" viewBox="0 0 21 18" fill="none" stroke="#fff" strokeWidth="1.200">
                <path d="M1 6h2.500L7 2.500v13L3.500 12H1zM10 6.500c1.300 1.500 1.300 3.500 0 5M13 4.500c2.500 2.500 2.500 6.500 0 9M16 2c4 4 4 10 0 14" />
              </svg>
            </TrayButton>
            <TrayButton $width={30} aria-label="Сеть">
              <svg width="20" height="18" viewBox="0 0 20 18" fill="none" stroke="#fff" strokeWidth="1.200">
                <path d="M5 1.500h14v11H3.500V5M8 16h6M11 12.500V16M.7 1h4v4h-4zM2.700 5v11" />
              </svg>
            </TrayButton>
            <TrayButton $width={44}>РУС</TrayButton>
            <Clock>16:15<br />08.06.2017</Clock>
            <TrayButton $width={42} aria-label="Уведомления">
              <svg width="21" height="20" viewBox="0 0 21 20" fill="none" stroke="#fff" strokeWidth="1.400"><path d="M1 1h19v14.500h-6.500l-3.500 3-3.500-3H1z" /></svg>
            </TrayButton>
            <Gap $width={14} />
            <ShowDesktop aria-label="Свернуть все окна" />
          </Tray>
        </TaskBar>
      </Desktop>
    </>
  );
}
